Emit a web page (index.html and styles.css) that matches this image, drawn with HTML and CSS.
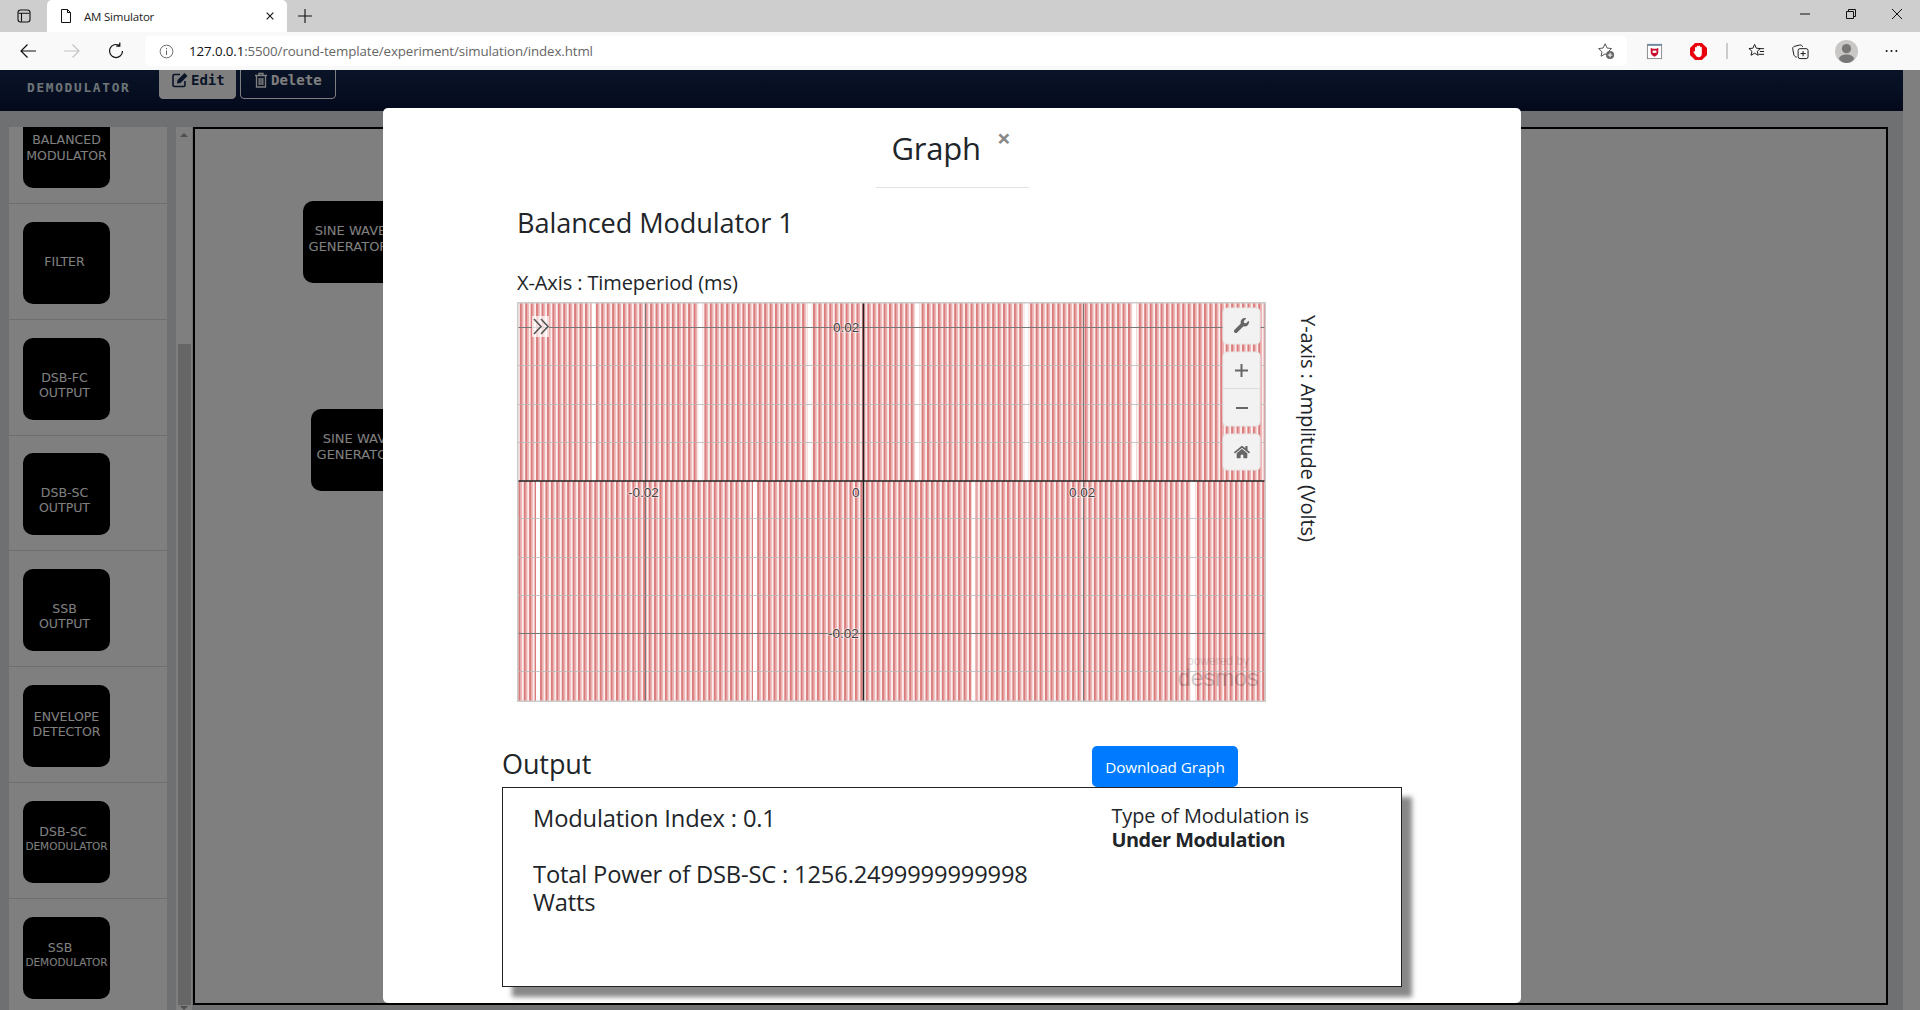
FILE: index.html
```html
<!DOCTYPE html>
<html lang="en">
<head>
<meta charset="utf-8">
<title>AM Simulator</title>
<link rel="stylesheet" href="styles.css">
</head>
<body>
<div class="tabstrip">
  <svg class="ic tabs-ic" viewBox="0 0 16 16"><rect x="2" y="2" width="12" height="12" rx="2.5" fill="none" stroke="#111" stroke-width="1.1"/><path d="M2.5 5.2h11M5.5 5.2v8.5" stroke="#111" stroke-width="1.1" fill="none"/></svg>
  <div class="tab">
    <svg class="ic page-ic" viewBox="0 0 16 16"><path d="M3.5 1.5h6l3 3v10h-9z M9.5 1.5v3h3" fill="#fff" stroke="#111" stroke-width="1"/></svg>
    <span class="tab-title">AM Simulator</span>
    <svg class="ic tab-x" viewBox="0 0 12 12"><path d="M2 2l8 8M10 2l-8 8" stroke="#111" stroke-width="1.3"/></svg>
  </div>
  <svg class="ic new-tab" viewBox="0 0 16 16"><path d="M8 1v14M1 8h14" stroke="#111" stroke-width="1.1"/></svg>
  <div class="win-btns">
    <svg class="ic" viewBox="0 0 12 12"><path d="M1 6h10" stroke="#111"/></svg>
    <svg class="ic" viewBox="0 0 12 12"><path d="M1.5 3.5h7v7h-7z M3.5 3.5V1.5h7v7H8.5" fill="none" stroke="#111"/></svg>
    <svg class="ic" viewBox="0 0 12 12"><path d="M1 1l10 10M11 1L1 11" stroke="#111"/></svg>
  </div>
</div>
<div class="toolbar">
  <svg class="ic nav-ic" viewBox="0 0 18 18"><path d="M17 9H2M8.5 2.5L2 9l6.5 6.5" fill="none" stroke="#111" stroke-width="1.2"/></svg>
  <svg class="ic nav-ic" viewBox="0 0 18 18"><path d="M1 9h15M9.5 2.5L16 9l-6.5 6.5" fill="none" stroke="#c4c4c4" stroke-width="1.2"/></svg>
  <svg class="ic nav-ic" viewBox="0 0 18 18"><path d="M15.5 9A6.5 6.5 0 1 1 12.6 3.6M12.8 0.5v3.6H9.2" fill="none" stroke="#111" stroke-width="1.2"/></svg>
  <div class="urlbar">
    <svg class="ic info-ic" viewBox="0 0 16 16"><circle cx="8" cy="8" r="6.8" fill="none" stroke="#666" stroke-width="1"/><path d="M8 7v4.6M8 4.2v1.3" stroke="#666" stroke-width="1.1"/></svg>
    <span class="url"><span class="url-host">127.0.0.1</span>:5500/round-template/experiment/simulation/index.html</span>
    <svg class="ic star-add" viewBox="0 0 20 20"><path d="M9 2l2.2 4.7 5 .6-3.7 3.5 1 5L9 13.3 4.5 15.800l1-5L1.800 7.300l5-.6z" fill="none" stroke="#444" stroke-width="1"/><circle cx="14.500" cy="14.500" r="4.500" fill="#666"/><path d="M14.500 12v5M12 14.500h5" stroke="#fff" stroke-width="1.100"/></svg>
  </div>
  <div class="ext-icons">
    <svg class="ic ext-ic" viewBox="0 0 18 18"><rect x="1.500" y="1.500" width="15" height="15" fill="#fff" stroke="#8a8a8a"/><path d="M1.500 2h15" stroke="#6d8aa0" stroke-width="2"/><path d="M5 5l2 1.200h4L13 5v5c0 2-2 3.500-4 4.500C7 13.500 5 12 5 10z" fill="#c8102e"/><path d="M7 8h4v2.500H7z" fill="#fff"/></svg>
    <svg class="ic ext-ic" viewBox="0 0 18 18"><path d="M5.400 0h7.200L18 5.400v7.200L12.600 18H5.400L0 12.600V5.400z" fill="#e8000d"/><path d="M5.300 8.800V5.200a.9.900 0 0 1 1.800 0V3.800a.9.900 0 0 1 1.800 0v-.2a.9.900 0 0 1 1.800 0v1.200a.9.900 0 0 1 1.800 0V11.500c0 2.300-1.300 3.600-3.400 3.600-1.800 0-2.700-1-3.500-2.600L3.700 10c-.4-1 .9-1.800 1.600-.9z" fill="#fff"/></svg>
    <span class="tool-sep"></span>
    <svg class="ic ext-ic" viewBox="0 0 18 18"><path d="M7 1.500l1.800 4 4.200.4-3.200 2.900 1 4.200L7 10.800 3.200 13l1-4.200L1 5.900l4.200-.4z" fill="none" stroke="#111" stroke-width="1"/><path d="M11.500 6H17M12.500 9H17M11.500 12H17" stroke="#111" stroke-width="1"/></svg>
    <svg class="ic ext-ic" viewBox="0 0 18 18"><path d="M5 15c-1.500-.2-2.500-1-3-2.500L.8 6.500C.5 5 1.300 3.800 2.800 3.500L8 2.200c1.500-.3 2.800.3 3.300 1.800" fill="none" stroke="#111" stroke-width="1"/><rect x="6.500" y="6" width="10.500" height="10.500" rx="2" fill="#f9f9f9" stroke="#111" stroke-width="1"/><path d="M11.700 8.500v5.500M9 11.200h5.500" stroke="#111" stroke-width="1"/></svg>
    <svg class="ic avatar" viewBox="0 0 24 24"><circle cx="12" cy="12" r="12" fill="#c9c7c5"/><circle cx="12" cy="9" r="4.800" fill="#777"/><path d="M4 19.500C5 16 8.500 15 12 15s7 1 8 4.500C18 22.500 15 24 12 24s-6-1.500-8-4.500z" fill="#777"/></svg>
    <svg class="ic dots" viewBox="0 0 16 4"><circle cx="2" cy="2" r="1.200" fill="#111"/><circle cx="8" cy="2" r="1.200" fill="#111"/><circle cx="14" cy="2" r="1.200" fill="#111"/></svg>
  </div>
</div>
<div class="page">
  <div class="page-main">
    <nav class="navbar">
      <span class="brand">DEMODULATOR</span>
      <button class="nbtn nbtn-edit">
        <svg class="ic nb-ic" viewBox="0 0 16 16"><path d="M13 9v4a1.500 1.500 0 0 1-1.500 1.500h-9A1.500 1.500 0 0 1 1 13V4a1.500 1.500 0 0 1 1.500-1.500H8" fill="none" stroke="currentColor" stroke-width="1.600"/><path d="M5.500 8l7-7 3 3-7 7-3.500.5z" fill="currentColor"/></svg>Edit
      </button>
      <button class="nbtn nbtn-del">
        <svg class="ic nb-ic" viewBox="0 0 14 16"><path d="M1 3.500h12M5 3.500V1.500h4v2M2.500 3.500V15h9V3.500M5.200 6v7M7 6v7M8.800 6v7" fill="none" stroke="currentColor" stroke-width="1.300"/></svg>Delete
      </button>
    </nav>
    <div class="workspace">
      <aside class="sidebar">
        <div class="side-inner">
          <div class="side-item"><div class="block block-two">BALANCED<br>MODULATOR</div></div>
          <div class="side-item"><div class="block block-filter">FILTER</div></div>
          <div class="side-item"><div class="block block-out">DSB-FC<br>OUTPUT</div></div>
          <div class="side-item"><div class="block block-out">DSB-SC<br>OUTPUT</div></div>
          <div class="side-item"><div class="block block-out">SSB<br>OUTPUT</div></div>
          <div class="side-item"><div class="block block-env">ENVELOPE<br>DETECTOR</div></div>
          <div class="side-item"><div class="block block-demod"><span class="first-line">DSB-SC</span><span class="small-line">DEMODULATOR</span></div></div>
          <div class="side-item"><div class="block block-demod"><span class="first-line first-short">SSB</span><span class="small-line">DEMODULATOR</span></div></div>
        </div>
      </aside>
      <div class="side-scroll">
        <span class="arrow-up"></span>
        <span class="thumb"></span>
        <span class="arrow-down"></span>
      </div>
      <div class="canvas-col">
        <div class="canvas">
          <div class="block canvas-block cb-a">SINE WAVE<br>GENERATOR</div>
          <div class="block canvas-block cb-b">SINE WAVE<br>GENERATOR</div>
        </div>
      </div>
    </div>
    <div class="backdrop"></div>
    <section class="modal">
      <header class="modal-head">
        <h2 class="modal-title">Graph</h2>
        <span class="modal-close">×</span>
      </header>
      <h3 class="graph-name">Balanced Modulator 1</h3>
      <p class="x-label">X-Axis : Timeperiod (ms)</p>
      <div class="graph-row">
        <svg class="graph" width="749" height="400" viewBox="517 302 749 400">
          <defs>
            <pattern id="st1" patternUnits="userSpaceOnUse" x="519.800" y="0" width="5.430" height="10">
              <rect width="5.430" height="10" fill="#fbeeee"/>
              <rect width="2.200" height="10" fill="#da7c7c"/>
              <rect x="2.200" width="1.200" height="10" fill="#e9a4a4"/>
            </pattern>
            <pattern id="st2" patternUnits="userSpaceOnUse" x="518.300" y="0" width="5.430" height="10">
              <rect width="5.430" height="10" fill="#fbeeee"/>
              <rect width="2.200" height="10" fill="#da7c7c"/>
              <rect x="2.200" width="1.200" height="10" fill="#e9a4a4"/>
            </pattern>
          </defs>
          <rect x="517" y="302" width="749" height="400" fill="#fff"/>
          <rect x="518" y="303" width="747" height="178" fill="url(#st1)"/>
          <rect x="518" y="481" width="747" height="220" fill="url(#st2)"/>
          <g fill="#fff">
            <rect x="591.500" y="303" width="4" height="178"/><rect x="698.500" y="303" width="4" height="178"/><rect x="807.500" y="303" width="4" height="178"/><rect x="915.500" y="303" width="4" height="178"/><rect x="1024.500" y="303" width="4" height="178"/><rect x="1132.500" y="303" width="4" height="178"/>
            <rect x="536" y="481" width="4" height="220"/><rect x="753" y="481" width="4" height="220"/><rect x="971.500" y="481" width="4" height="220"/><rect x="1191" y="481" width="4" height="220"/>
          </g>
          <g stroke="#b8b8b8" stroke-width="1" opacity=".75">
            <path d="M518 365.500h747M518 404.500h747M518 442.500h747M518 518.500h747M518 557.500h747M518 595.500h747M518 671.500h747"/>
          </g>
          <g stroke="#777" stroke-width="1">
            <path d="M518 327.500h747M518 633.500h747M645.500 303v398M1083.500 303v398"/>
          </g>
          <path d="M518 481h747" stroke="#222" stroke-width="1.500"/>
          <path d="M863.500 303v398" stroke="#222" stroke-width="1.500"/>
          <g class="tick-labels">
            <text x="833" y="332">0.02</text>
            <text x="628" y="497">-0.02</text>
            <text x="852" y="497">0</text>
            <text x="1069" y="497">0.02</text>
            <text x="828" y="638">-0.02</text>
          </g>
          <rect x="532" y="316" width="17" height="21" fill="#fff" opacity=".7"/>
          <path d="M534 319l7 7.500-7 7.500M541 319l7 7.500-7 7.500" fill="none" stroke="#555" stroke-width="1.600"/>
          <text class="powered" x="1187" y="665">powered by</text>
          <text class="desmos" x="1178" y="686">desmos</text>
          <g class="ctl">
            <rect x="1223" y="308" width="37" height="36" rx="4"/>
            <rect x="1223" y="352" width="37" height="74" rx="4"/>
            <rect x="1223" y="434" width="37" height="36" rx="4"/>
          </g>
          <path d="M1223 388.500h37" stroke="#ddd"/>
          <svg x="1234" y="318" width="15" height="15" viewBox="0 0 512 512"><path fill="#666" d="M507.730 109.100c-2.240-9.030-13.540-12.090-20.120-5.510l-74.360 74.360-67.880-11.310-11.310-67.880 74.360-74.360c6.620-6.620 3.430-17.900-5.660-20.160-47.380-11.740-99.550.91-136.580 37.930-39.640 39.640-50.550 97.100-34.050 147.200L18.740 402.760c-24.990 24.990-24.990 65.510 0 90.500 24.990 24.990 65.510 24.990 90.500 0l213.210-213.210c50.120 16.710 107.470 5.680 147.370-34.220 37.070-37.070 49.700-89.320 37.910-136.730z"/></svg>
          <path d="M1241.500 364v13M1235 370.500h13M1236 408h12" stroke="#666" stroke-width="2" fill="none"/>
          <svg x="1234" y="445" width="16" height="14.200" viewBox="0 0 576 512"><path fill="#666" d="M280.370 148.260L96 300.110V464a16 16 0 0 0 16 16l112.060-.29a16 16 0 0 0 15.920-16V368a16 16 0 0 1 16-16h64a16 16 0 0 1 16 16v95.640a16 16 0 0 0 16 16.050L464 480a16 16 0 0 0 16-16V300L295.670 148.260a12.190 12.190 0 0 0-15.300 0zM571.600 251.470L488 182.560V44.050a12 12 0 0 0-12-12h-56a12 12 0 0 0-12 12v72.610L318.470 43a48 48 0 0 0-61 0L4.340 251.470a12 12 0 0 0-1.600 16.900l25.500 31A12 12 0 0 0 45.150 301l235.220-193.740a12.190 12.190 0 0 1 15.300 0L530.900 301a12 12 0 0 0 16.900-1.600l25.500-31a12 12 0 0 0-1.700-16.930z"/></svg>
          <rect x="517.750" y="302.750" width="747.500" height="398.500" fill="none" stroke="#ccc" stroke-width="1.500"/>
        </svg>
        <div class="y-label">Y-axis : Amplitude (Volts)</div>
      </div>
      <div class="output-head">
        <h3 class="output-title">Output</h3>
        <button class="dl-btn">Download Graph</button>
      </div>
      <div class="output-box">
        <div class="out-left">
          <p class="out-line">Modulation Index : 0.1</p>
          <p class="out-line">Total Power of DSB-SC : 1256.2499999999998 Watts</p>
        </div>
        <div class="out-right">Type of Modulation is<br><b>Under Modulation</b></div>
      </div>
    </section>
  </div>
  <div class="page-scroll"></div>
</div>
</body>
</html>
```
FILE: styles.css
```css
* { box-sizing: border-box; }
html, body { margin: 0; height: 1010px; overflow: hidden; }
body { font-family: "Open Sans", "Noto Sans", sans-serif; color: #212529; display: flex; flex-direction: column; background: #fff; }
p, h2, h3 { margin: 0; font-weight: 400; }
.ic { display: block; flex: none; }

.tabstrip { height: 32px; background: #cecece; display: flex; align-items: flex-end; flex: none; }
.tabs-ic { width: 16px; height: 16px; margin: 0 15px 8px 16px; }
.tab { width: 240px; height: 32px; background: #fff; border-radius: 5px 5px 0 0; display: flex; align-items: center; padding-left: 11px; }
.page-ic { width: 16px; height: 18px; }
.tab-title { font-size: 11.5px; margin-left: 10px; width: 181px; letter-spacing: -.2px; color: #222; }
.tab-x { width: 10px; height: 10px; }
.new-tab { width: 16px; height: 16px; margin: 0 0 8px 10px; }
.win-btns { margin: 0 17px 12px auto; display: flex; gap: 34px; }
.win-btns .ic { width: 12px; height: 12px; }

.toolbar { height: 38px; background: #f9f9f9; display: flex; align-items: center; flex: none; padding-left: 19px; }
.nav-ic { width: 18px; height: 18px; margin-right: 26px; }
.urlbar { width: 1482px; height: 30px; margin-left: -6px; background: #fff; border-radius: 5px; display: flex; align-items: center; padding: 0 12px 0 14px; }
.info-ic { width: 15px; height: 15px; }
.url { font-size: 13.300px; margin-left: 15px; color: #666; letter-spacing: -.1px; flex: 1; white-space: nowrap; }
.url-host { color: #111; }
.star-add { width: 18px; height: 18px; }
.ext-icons { display: flex; align-items: center; margin-left: 19px; }
.ext-ic { width: 17px; height: 17px; }
.ext-icons > .ext-ic:nth-child(2) { margin-left: 27px; }
.tool-sep { width: 2px; height: 16px; background: #ccc; margin: 0 20px 0 19px; }
.ext-icons > .ext-ic:nth-child(5) { margin-left: 27px; }
.avatar { width: 23px; height: 23px; margin-left: 26px; }
.dots { width: 13px; height: 4px; margin-left: 27px; }

.page { flex: 1; display: flex; min-height: 0; }
.page-main { position: relative; flex: 1; background: #dee0e4; display: flex; flex-direction: column; overflow: hidden; }
.page-scroll { width: 17px; background: #7f7f7f; }
.navbar { height: 41px; flex: none; background: linear-gradient(#14284f, #081338); display: flex; align-items: flex-start; padding-left: 27px; overflow: visible; }
.brand { font-family: "DejaVu Sans Mono", monospace; font-weight: 700; font-size: 12.800px; letter-spacing: 1.700px; color: #dde8f0; margin-top: 10px; width: 132px; white-space: nowrap; }
.nbtn { font-family: "DejaVu Sans Mono", monospace; font-weight: 700; font-size: 14px; height: 35px; margin-top: -6px; border-radius: 4px; border: 1px solid #fff; display: flex; align-items: center; padding: 0 0 4px 12px; }
.nb-ic { width: 16px; height: 16px; margin-right: 4px; }
.nbtn-edit { width: 77px; background: #fff; color: #14284f; margin-right: 4px; }
.nbtn-edit .nb-ic { margin-right: 3px; }
.nbtn-del { width: 96px; background: transparent; color: #fff; }
.nbtn-del .nb-ic { margin-right: 2px; }

.workspace { flex: 1; display: grid; grid-template-columns: 158px 17px 1695px; column-gap: 0; padding: 16px 0 0 9px; min-height: 0; }
.sidebar { background: #fff; overflow: hidden; margin-right: 0; }
.side-inner { margin-top: -38.830px; }
.side-item { height: 115.830px; padding: 17.830px 0 0 14px; border-bottom: 1px solid #dcdcdc; }
.block { width: 87px; height: 82px; background: #000; color: #fff; border-radius: 10px; font-family: "DejaVu Sans", sans-serif; font-size: 12.500px; text-align: center; }
.block-two { line-height: 16px; padding-top: 26px; }
.block-filter { line-height: 16px; padding: 32px 4px 0 0; }
.block-out { line-height: 15px; padding: 32px 4px 0 0; }
.block-env { line-height: 15px; padding-top: 24px; }
.block-demod { line-height: 15px; padding-top: 23px; }
.first-line { display: block; padding-right: 7px; }
.first-short { padding-right: 13px; }
.small-line { display: block; font-size: 10.500px; }
.side-scroll { position: relative; margin-left: 9px; width: 16px; background: #fff; }
.arrow-up, .arrow-down { position: absolute; left: 4px; width: 0; height: 0; border-left: 4px solid transparent; border-right: 4px solid transparent; }
.arrow-up { top: 6px; border-bottom: 4px solid #a0a0a0; }
.arrow-down { bottom: 0; border-top: 4px solid #a0a0a0; }
.thumb { position: absolute; left: 2px; width: 13px; top: 217px; height: 661px; background: #cdcdcd; }
.canvas-col { margin-left: 9px; width: 1695px; }
.canvas { position: relative; width: 1695px; height: 878px; background: #fff; border: 2px solid #000; overflow: hidden; }
.canvas-block { position: absolute; font-size: 13px; line-height: 16px; width: 91px; padding-top: 22px; text-indent: 4px; }
.cb-a { left: 108px; top: 72px; }
.cb-b { left: 116px; top: 280px; }

.backdrop { position: absolute; inset: 0; background: rgba(0, 0, 0, .5); }
.modal { position: absolute; left: 383px; top: 38px; width: 1138px; height: 895px; background: #fff; border-radius: 5px; display: flex; flex-direction: column; }
.modal-head { width: 153px; height: 80px; margin: 0 auto; padding: 16px 0 0 16px; border-bottom: 1px solid #dee2e6; display: flex; align-items: flex-start; flex: none; }
.modal-title { font-size: 31px; line-height: 48px; letter-spacing: -.2px; }
.modal-close { font-size: 24px; font-weight: 700; line-height: 24px; color: #888; margin: 2px 0 0 16px; }
.graph-name { font-size: 27.150px; line-height: 40px; margin: 15px 0 0 134px; letter-spacing: -.1px; }
.x-label { font-size: 20px; line-height: 30px; margin: 25px 0 0 134px; letter-spacing: -.1px; }
.graph-row { display: flex; margin: 4px 0 0 134px; flex: none; height: 400px; }
.graph { display: block; flex: none; }
.tick-labels text { font-family: "Liberation Sans", sans-serif; font-size: 13.500px; fill: #444; paint-order: stroke; stroke: #fff; stroke-width: 1.500px; stroke-opacity: .5; }
.powered { font-family: "Liberation Sans", sans-serif; font-size: 12px; fill: #000; opacity: .14; }
.desmos { font-family: "Liberation Sans", sans-serif; font-size: 23px; fill: #000; opacity: .2; }
.ctl rect { fill: #f2f2f2; stroke: #e6e6e6; }
.y-label { writing-mode: vertical-rl; font-size: 20.100px; line-height: 24px; margin: 13px 0 0 30px; white-space: nowrap; letter-spacing: -.1px; }
.output-head { display: flex; align-items: flex-end; margin: 44px 0 0 119px; height: 41px; flex: none; }
.output-title { font-size: 27px; line-height: 41px; width: 590px; letter-spacing: -.1px; margin-bottom: 3px; }
.dl-btn { width: 146px; height: 41px; background: #007bff; color: #fff; border: 0; border-radius: 5px; font-family: inherit; font-size: 15.300px; padding: 0; letter-spacing: -.1px; }
.output-box { margin-left: 119px; width: 900px; height: 200px; flex: none; border: 1.500px solid #222; box-shadow: 10px 10px 5px #888; display: flex; background: #fff; }
.out-left { width: 608.500px; padding: 16px 80px 0 30px; font-size: 23.700px; line-height: 28px; letter-spacing: -.16px; flex: none; }
.out-line { margin-bottom: 28px; }
.out-right { padding: 16px 0 0 0; font-size: 19.900px; line-height: 24px; letter-spacing: -.1px; }
.out-right b { font-weight: 700; letter-spacing: -.5px; }
```
